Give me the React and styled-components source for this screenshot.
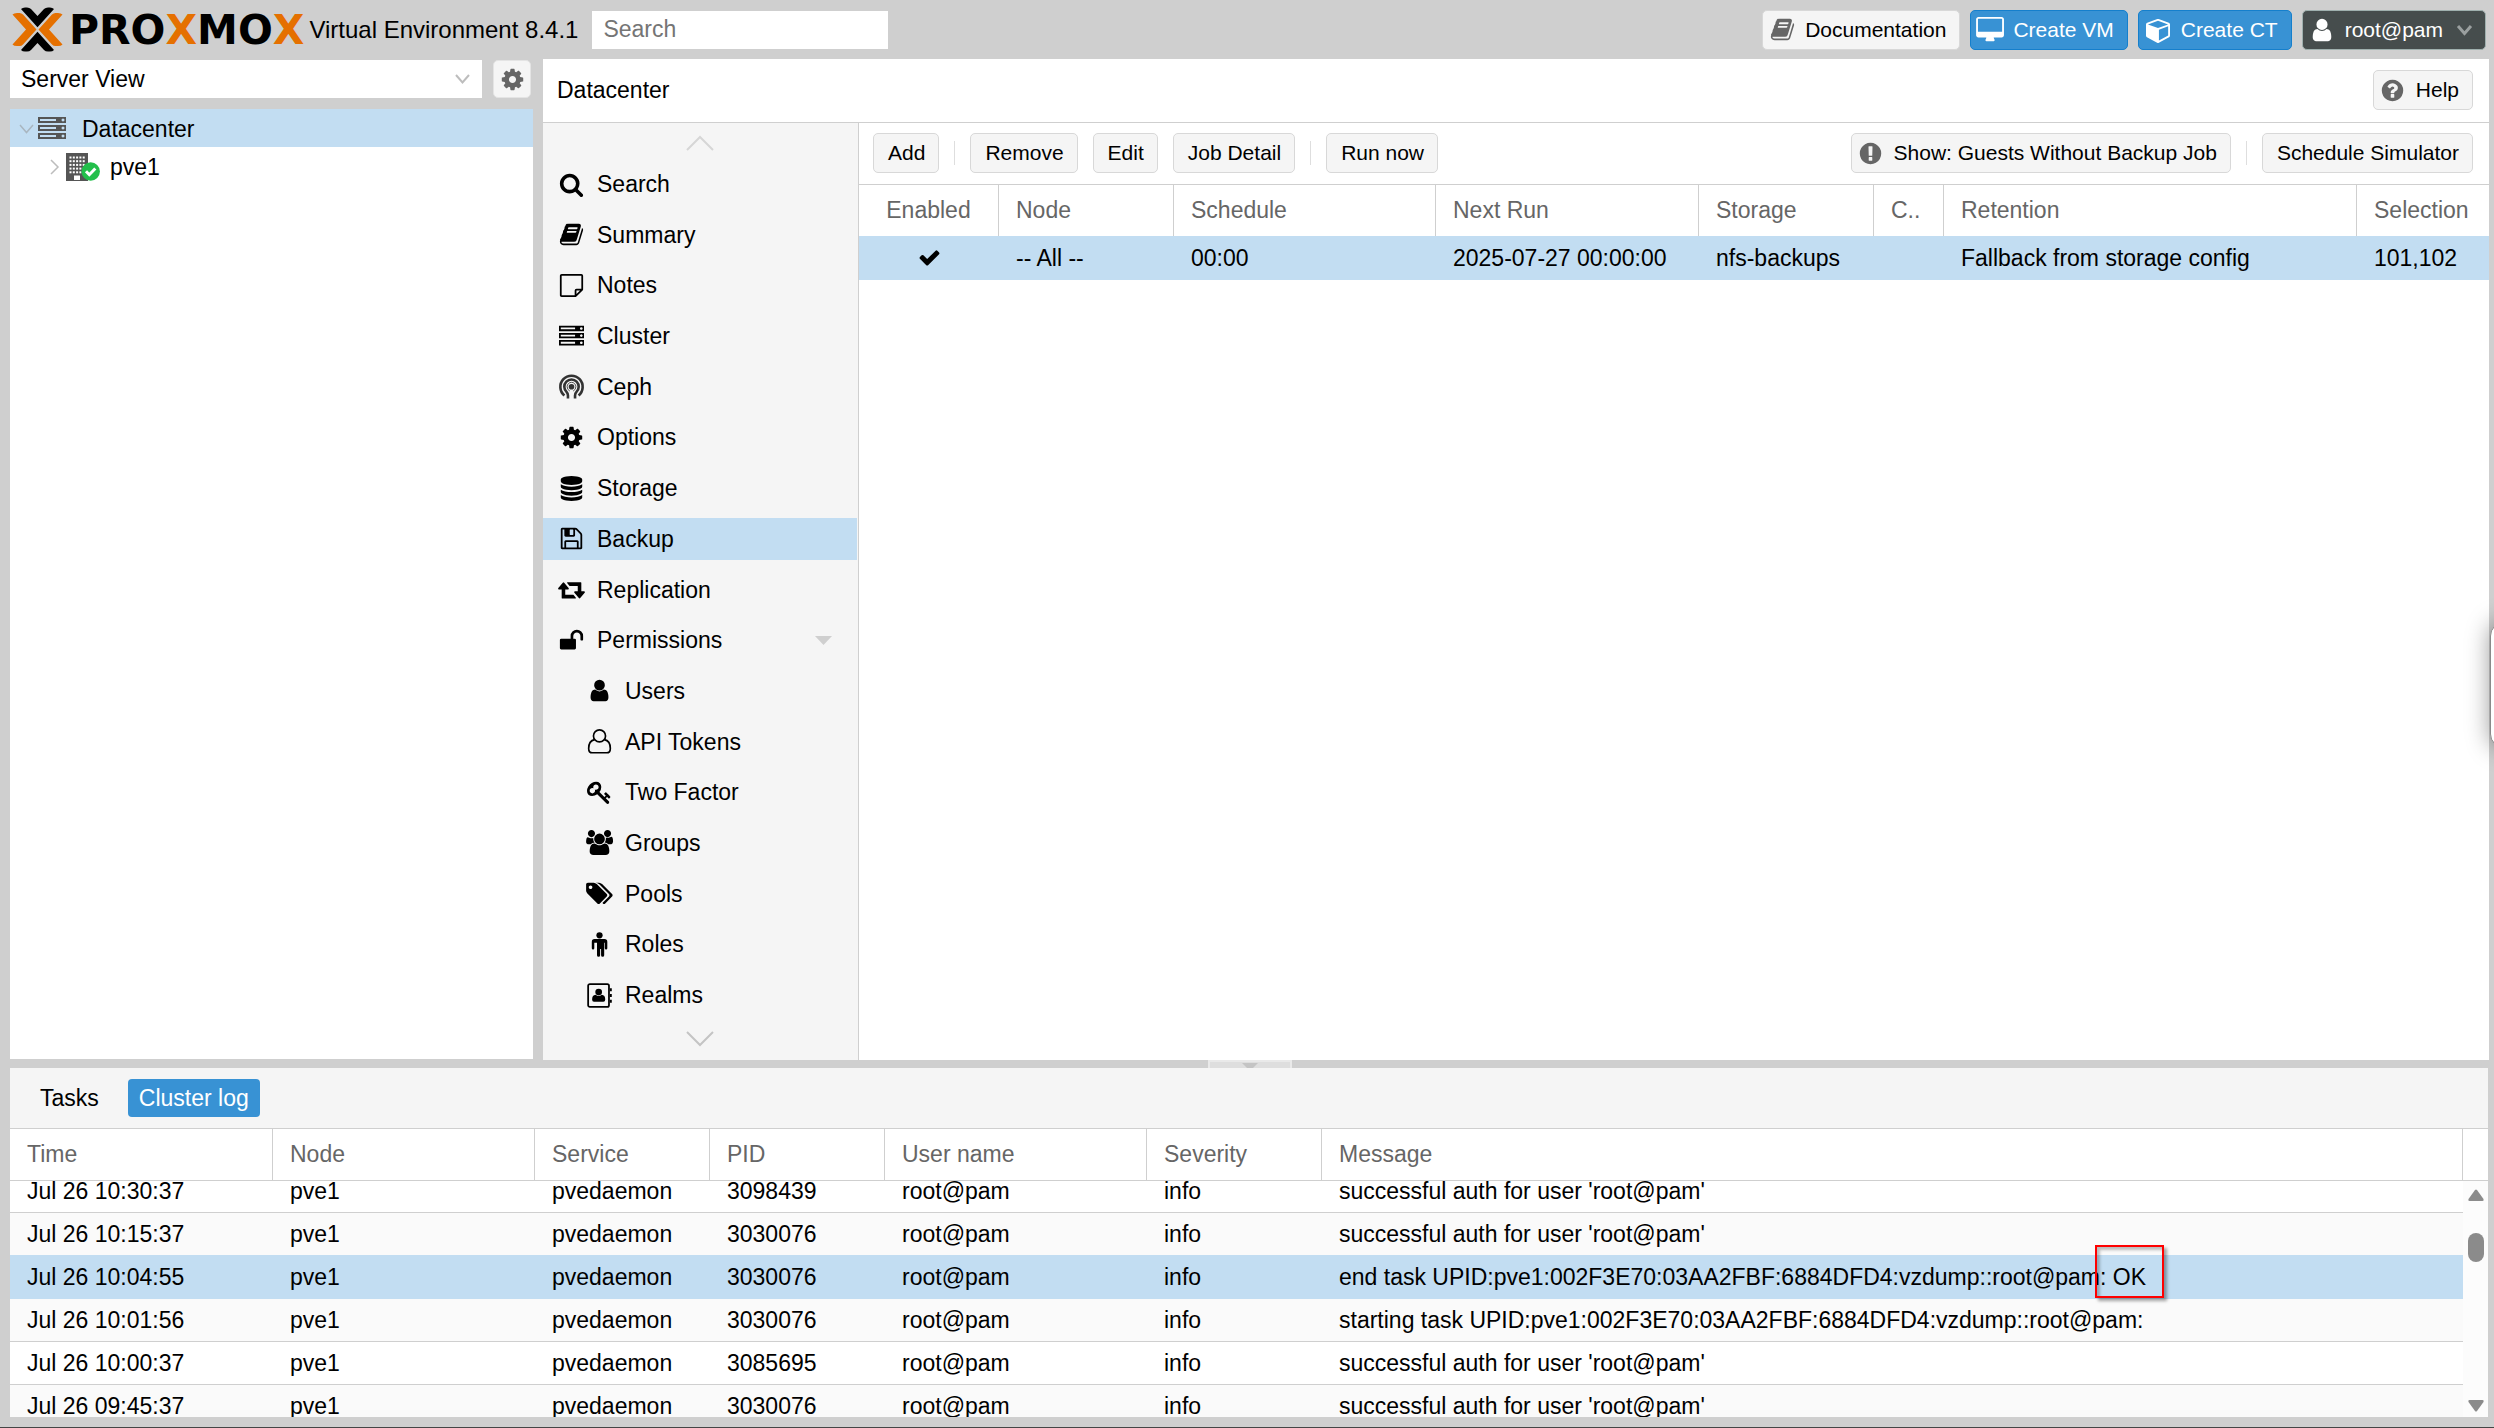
import React, { useLayoutEffect, useRef } from "react";
import styled, { createGlobalStyle, css } from "styled-components";

const GlobalStyle = createGlobalStyle`
  *, *::before, *::after { box-sizing: border-box; }
  html, body, #root { height: 100%; }
  body {
    margin: 0;
    overflow: hidden;
    background: #cfcfcf;
    color: #000;
    font: 23px/28px "Liberation Sans", Arial, Helvetica, sans-serif;
  }
  button, input, select { font: inherit; color: inherit; margin: 0; }
`;

/* ---------- icons ---------- */

const Svg = styled.svg`
  display: block;
  flex: none;
  width: ${(p) => p.$w || p.$size || 24}px;
  height: ${(p) => p.$size || 24}px;
  fill: currentColor;
  overflow: visible;
`;

const PATHS = {
  search: [1792, "M1216 832q0-185-131.5-316.5t-316.5-131.5-316.5 131.5-131.5 316.5 131.5 316.5 316.5 131.5 316.5-131.5 131.5-316.5zm512 832q0 52-38 90t-90 38q-54 0-90-38l-343-342q-179 124-399 124-143 0-273.5-55.5t-225-150-150-225-55.5-273.5 55.5-273.5 150-225 225-150 273.5-55.5 273.5 55.5 225 150 150 225 55.5 273.5q0 220-124 399l343 343q37 37 37 90z"],
  book: [1792, "M1703 478q40 57 18 129l-275 906q-19 64-76.5 107.5t-122.5 43.5h-923q-77 0-148.5-53.5t-99.5-131.5q-24-67-2-127 0-4 3-27t4-37q1-8-3-21.5t-3-19.5q2-11 8-21t16.5-23.5 16.5-23.5q23-38 45-91.5t30-91.5q3-10 .5-30t-.5-28q3-11 17-28t17-23q21-36 42-92t25-90q1-9-2.5-32t.5-28q4-13 22-30.5t22-22.5q19-26 42.5-84.5t27.5-96.5q1-8-3-25.5t-2-26.5q2-8 9-18t18-23 17-21q8-12 16.5-30.5t15-35 16-36 19.5-32 26.5-23.5 36-11.5 47.5 5.5l-1 3q38-9 51-9h761q74 0 114 56t18 130l-274 906q-36 119-71.5 153.5t-128.5 34.5h-869q-27 0-38 15-11 16-1 43 24 70 144 70h923q29 0 56-15.5t35-41.5l300-987q7-22 5-57 38 15 59 43zm-1064 2q-4 13 2 22.5t20 9.5h608q13 0 25.5-9.5t16.5-22.5l21-64q4-13-2-22.5t-20-9.5h-608q-13 0-25.5 9.5t-16.5 22.5zm-83 256q-4 13 2 22.5t20 9.5h608q13 0 25.5-9.5t16.5-22.5l21-64q4-13-2-22.5t-20-9.5h-608q-13 0-25.5 9.5t-16.5 22.5z"],
  server: [1792, "M128 1408h1024v-128h-1024v128zm0-512h1024v-128h-1024v128zm1568 448q0-40-28-68t-68-28-68 28-28 68 28 68 68 28 68-28 28-68zm-1568-960h1024v-128h-1024v128zm1568 448q0-40-28-68t-68-28-68 28-28 68 28 68 68 28 68-28 28-68zm0-512q0-40-28-68t-68-28-68 28-28 68 28 68 68 28 68-28 28-68zm96 832v384h-1792v-384h1792zm0-512v384h-1792v-384h1792zm0-512v384h-1792v-384h1792z"],
  gear: [1792, "M1152 896q0-106-75-181t-181-75-181 75-75 181 75 181 181 75 181-75 75-181zm512-109v222q0 12-8 23t-20 13l-185 28q-19 54-39 91 35 50 107 138 10 12 10 25t-9 23q-27 37-99 108t-94 71q-12 0-26-9l-138-108q-44 23-91 38-16 136-29 186-7 28-36 28h-222q-14 0-24.5-8.5t-11.5-21.5l-28-184q-49-16-90-37l-141 107q-10 9-25 9-14 0-25-11-126-114-165-168-7-10-7-23 0-12 8-23 15-21 51-66.5t54-70.5q-27-50-41-99l-183-27q-13-2-21-12.5t-8-23.5v-222q0-12 8-23t19-13l186-28q14-46 39-92-40-57-107-138-10-12-10-24 0-10 9-23 26-36 98.5-107.5t94.5-71.5q13 0 26 10l138 107q44-23 91-38 16-136 29-186 7-28 36-28h222q14 0 24.5 8.5t11.5 21.5l28 184q49 16 90 37l142-107q9-9 24-9 13 0 25 10 129 119 165 170 7 8 7 22 0 12-8 23-15 21-51 66.5t-54 70.5q26 50 41 98l183 28q13 2 21 12.5t8 23.5z"],
  database: [1792, "M896 768q237 0 443-43t325-127v170q0 69-103 128t-280 93.5-385 34.5-385-34.5-280-93.5-103-128v-170q119 84 325 127t443 43zm0 768q237 0 443-43t325-127v170q0 69-103 128t-280 93.5-385 34.5-385-34.5-280-93.5-103-128v-170q119 84 325 127t443 43zm0-384q237 0 443-43t325-127v170q0 69-103 128t-280 93.5-385 34.5-385-34.5-280-93.5-103-128v-170q119 84 325 127t443 43zm0-1152q208 0 385 34.5t280 93.5 103 128v128q0 69-103 128t-280 93.5-385 34.5-385-34.5-280-93.5-103-128v-128q0-69 103-128t280-93.5 385-34.5z"],
  floppy: [1792, "M512 1536h768v-384h-768v384zm896 0h128v-896q0-14-10-38.5t-20-34.5l-281-281q-10-10-34-20t-39-10v416q0 40-28 68t-68 28h-576q-40 0-68-28t-28-68v-416h-128v1280h128v-416q0-40 28-68t68-28h832q40 0 68 28t28 68v416zm-384-928v-320q0-13-9.5-22.5t-22.5-9.5h-192q-13 0-22.5 9.5t-9.5 22.5v320q0 13 9.5 22.5t22.5 9.5h192q13 0 22.5-9.5t9.5-22.5zm640 32v928q0 40-28 68t-68 28h-1344q-40 0-68-28t-28-68v-1344q0-40 28-68t68-28h928q40 0 88 20t76 48l280 280q28 28 48 76t20 88z"],
  retweet: [1920, "M1280 1504q0 13-9.5 22.5t-22.5 9.5h-960q-8 0-13.5-2t-9-7-5.5-8-3-11.5-1-11.5v-600h-192q-26 0-45-19t-19-45q0-24 15-41l320-384q19-22 49-22t49 22l320 384q15 17 15 41 0 26-19 45t-45 19h-192v384h576q16 0 25 11l160 192q7 10 7 21zm640-416q0 24-15 41l-320 384q-20 23-49 23t-49-23l-320-384q-15-17-15-41 0-26 19-45t45-19h192v-384h-576q-16 0-25-12l-160-192q-7-9-7-20 0-13 9.5-22.5t22.5-9.5h960q8 0 13.5 2t9 7 5.5 8 3 11.5 1 11.5v600h192q26 0 45 19t19 45z"],
  unlock: [1792, "M1728 576v256q0 26-19 45t-45 19h-64q-26 0-45-19t-19-45v-256q0-106-75-181t-181-75-181 75-75 181v192h96q40 0 68 28t28 68v576q0 40-28 68t-68 28h-960q-40 0-68-28t-28-68v-576q0-40 28-68t68-28h672v-192q0-185 131.5-316.5t316.5-131.5 316.5 131.5 131.5 316.5z"],
  user: [1792, "M1536 1399q0 109-62.5 187t-150.5 78h-854q-88 0-150.5-78t-62.5-187q0-85 8.5-160.5t31.5-152 58.5-131 94-89 134.5-34.5q131 128 313 128t313-128q76 0 134.5 34.5t94 89 58.5 131 31.5 152 8.5 160.5zm-256-887q0 159-112.5 271.5t-271.5 112.5-271.5-112.5-112.5-271.5 112.5-271.5 271.5-112.5 271.5 112.5 112.5 271.5z"],
  key: [1792, "M832 512q0-80-56-136t-136-56-136 56-56 136q0 42 19 83-41-19-83-19-80 0-136 56t-56 136 56 136 136 56 136-56 56-136q0-42-19-83 41 19 83 19 80 0 136-56t56-136zm851 704q0 17-49 66t-66 49q-9 0-28.5-16t-36.5-33-38.5-40-24.5-26l-96 96 220 220q28 28 28 68 0 42-39 81t-81 39q-40 0-68-28l-671-671q-176 131-365 131-163 0-265.5-102.5t-102.5-265.5q0-160 95-313t248-248 313-95q163 0 265.5 102.5t102.5 265.5q0 189-131 365l355 355 96-96q-3-3-26-24.5t-40-38.5-33-36.5-16-28.5q0-17 49-66t66-49q13 0 23 10 6 6 46 44.5t82 79.5 86.5 86 73 78 28.5 41z"],
  users: [1920, "M593 896q-162 5-265 128h-134q-82 0-138-40.5t-56-118.5q0-353 124-353 6 0 43.5 21t97.5 42.5 119 21.5q67 0 133-23-5 37-5 66 0 159 93 293zm1071 637q0 120-73 189.5t-194 69.5h-874q-121 0-194-69.5t-73-189.5q0-53 3.5-103.5t14-109 26.5-108.5 43-97.5 62-81 85.5-53.5 111.5-20q10 0 43 21.5t73 48 107 48 135 21.5 135-21.5 107-48 73-48 43-21.5q61 0 111.5 20t85.5 53.5 62 81 43 97.5 26.5 108.5 14 109 3.5 103.5zm-1024-1277q0 106-75 181t-181 75-181-75-75-181 75-181 181-75 181 75 75 181zm704 384q0 159-112.5 271.5t-271.5 112.5-271.5-112.5-112.5-271.5 112.5-271.5 271.5-112.5 271.5 112.5 112.5 271.5zm576 225q0 78-56 118.5t-138 40.5h-134q-103-123-265-128 93-134 93-293 0-29-5-66 66 23 133 23 59 0 119-21.5t97.5-42.5 43.5-21q124 0 124 353zm-128-609q0 106-75 181t-181 75-181-75-75-181 75-181 181-75 181 75 75 181z"],
  tags: [1920, "M448 448q0-53-37.5-90.5t-90.5-37.5-90.5 37.5-37.5 90.5 37.5 90.5 90.5 37.5 90.5-37.5 37.5-90.5zm1067 576q0 53-37 90l-491 492q-39 37-91 37-53 0-90-37l-715-716q-38-37-64.5-101t-26.5-117v-416q0-52 38-90t90-38h416q53 0 117 26.5t102 64.5l715 714q37 39 37 91zm384 0q0 53-37 90l-491 492q-39 37-91 37-36 0-59-14t-53-45l470-470q37-37 37-90 0-52-37-91l-715-714q-38-38-102-64.5t-117-26.5h224q53 0 117 26.5t102 64.5l715 714q37 39 37 91z"],
  question: [1792, "M1024 1376v-192q0-14-9-23t-23-9h-192q-14 0-23 9t-9 23v192q0 14 9 23t23 9h192q14 0 23-9t9-23zm256-672q0-88-55.5-163t-138.5-116-170-41q-243 0-371 213-15 24 8 42l132 100q7 6 19 6 16 0 25-12 53-68 86-92 34-24 86-24 48 0 85.5 26t37.5 59q0 38-20 61t-68 45q-63 28-115.5 86.5t-52.5 125.5v36q0 14 9 23t23 9h192q14 0 23-9t9-23q0-19 21.5-49.5t54.5-49.5q32-18 49-28.5t46-35 44.5-48 28-60.5 12.5-81zm384 192q0 209-103 385.5t-279.5 279.5-385.5 103-385.5-103-279.5-279.5-103-385.5 103-385.5 279.5-279.5 385.5-103 385.5 103 279.5 279.5 103 385.5z"],
  exclamation: [1792, "M896 128q209 0 385.5 103t279.5 279.5 103 385.5-103 385.5-279.5 279.5-385.5 103-385.5-103-279.5-279.5-103-385.5 103-385.5 279.5-279.5 385.5-103zm128 1247v-190q0-14-9-23.5t-22-9.5h-192q-13 0-23 10t-10 23v190q0 13 10 23t23 10h192q13 0 22-9.5t9-23.5zm-2-344l18-621q0-12-10-18-10-8-24-8h-220q-14 0-24 8-10 6-10 18l17 621q0 10 10 17.5t24 7.5h185q14 0 23.5-7.5t10.5-17.5z"],
  desktop: [1856, "M1728 992v-832q0-13-9.5-22.5t-22.5-9.5h-1600q-13 0-22.5 9.5t-9.5 22.5v832q0 13 9.5 22.5t22.5 9.5h1600q13 0 22.5-9.5t9.5-22.5zm128-832v1088q0 66-47 113t-113 47h-544q0 37 16 77.5t32 71 16 43.5q0 26-19 45t-45 19h-512q-26 0-45-19t-19-45q0-14 16-44t32-70 16-78h-544q-66 0-113-47t-47-113v-1088q0-66 47-113t113-47h1600q66 0 113 47t47 113z"],
  cube: [1664, "M896 1629l640-349v-636l-640 233v752zm-64-865l698-254-698-254-698 254 698 254zm832-252v768q0 35-18 65t-49 47l-704 384q-28 16-61 16t-61-16l-704-384q-31-17-49-47t-18-65v-768q0-40 23-73t61-47l704-256q22-8 44-8t44 8l704 256q38 14 61 47t23 73z"],
  check: [1792, "M1671 566q0 40-28 68l-724 724-136 136q-28 28-68 28t-68-28l-136-136-362-362q-28-28-28-68t28-68l136-136q28-28 68-28t68 28l294 295 656-657q28-28 68-28t68 28l136 136q28 28 28 68z"],
};

function Icon({ name, size = 24 }) {
  if (name === "note")
    return (
      <Svg viewBox="0 0 24 24" $size={size} aria-hidden="true">
        <path
          d="M2.6 1.8h18.8q.9 0 .9.9v13.2l-6.4 6.3H2.6q-.9 0-.9-.9V2.7q0-.9.9-.9zM15.9 22V16.8q0-.9.9-.9H22"
          fill="none" stroke="currentColor" strokeWidth="1.7" strokeLinejoin="round" />
      </Svg>
    );
  if (name === "ceph")
    return (
      <Svg viewBox="0 0 24 24" $size={size} color="#333" aria-hidden="true">
        <g fill="none" stroke="currentColor" strokeWidth="2.5">
          <path d="M5.2 20.6A10.7 10.7 0 1 1 18.8 20.6" />
          <path d="M8.6 23.6V20.6Q8.6 18.6 7.2 17.2A6.9 6.9 0 1 1 16.8 17.2Q15.4 18.6 15.4 20.6V23.6" />
        </g>
        <circle cx="12" cy="12.2" r="2.7" />
        <path d="M10.4 16.4q-2.6-1.4-2.6-4.2a4.2 4.2 0 0 1 8.4 0q0 2.8-2.6 4.2" fill="none" stroke="currentColor" strokeWidth=".8" />
      </Svg>
    );
  if (name === "user-o")
    return (
      <Svg viewBox="0 0 24 24" $size={size} aria-hidden="true">
        <g fill="none" stroke="currentColor" strokeWidth="1.6">
          <circle cx="12" cy="6.6" r="5.8" />
          <path d="M7.3 10.2Q1.6 11.4 1.6 18.6q0 4.2 3.6 4.2h13.6q3.6 0 3.6-4.2 0-7.2-5.7-8.4" />
        </g>
      </Svg>
    );
  if (name === "male")
    return (
      <Svg viewBox="0 0 24 24" $size={size} aria-hidden="true">
        <circle cx="12" cy="3.2" r="3" />
        <path d="M7.2 6.8h9.6q2.7 0 2.7 2.7v6q0 1.2-1.2 1.2t-1.2-1.2V10.3h-.6V22.2q0 1.5-1.5 1.5t-1.5-1.5V16.4h-.9v5.8q0 1.5-1.5 1.5t-1.5-1.5V10.3H7v5.2q0 1.2-1.2 1.2t-1.2-1.2v-6q0-2.7 2.6-2.7z" />
      </Svg>
    );
  if (name === "address-book")
    return (
      <Svg viewBox="0 0 24 24" $size={size} aria-hidden="true">
        <rect x="1.1" y="1" width="20" height="22" rx="1.6" fill="none" stroke="currentColor" strokeWidth="1.7" />
        <path d="M22 5h1.8v3H22zM22 10.500h1.8v3H22zM22 16h1.8v3H22z" />
        <circle cx="11.2" cy="8.6" r="3.2" />
        <path d="M8.3 11.2q2.900 2.300 5.800 0 3.400.3 3.400 4.600 0 2.200-1.800 2.200H6.700q-1.800 0-1.800-2.200 0-4.300 3.400-4.600z" />
      </Svg>
    );
  const [box, d] = PATHS[name];
  return (
    <Svg viewBox={`0 0 ${box} 1792`} $size={size} $w={Math.round((size * box) / 1792)} aria-hidden="true">
      <path d={d} fillRule={name === "server" ? "evenodd" : "nonzero"} />
    </Svg>
  );
}

function Chevron({ width, height, d, color = "#bdbdbd", stroke = 2 }) {
  return (
    <Svg $w={width} $size={height} viewBox={`0 0 ${width} ${height}`} aria-hidden="true">
      <path d={d} fill="none" stroke={color} strokeWidth={stroke} />
    </Svg>
  );
}

/* ---------- shared controls ---------- */

const tones = {
  plain: css`background: #f5f5f5; border-color: #d8d8d8; color: #000;`,
  primary: css`background: #3892d4; border-color: #157fcc; color: #fff;`,
  dark: css`background: #464d4d; border-color: #9fb0ae; color: #fff;`,
};

const Button = styled.button`
  display: inline-flex;
  align-items: center;
  flex: none;
  gap: 9px;
  height: 40px;
  padding: 0 13px 0 ${(p) => (p.$icon ? 5 : 14)}px;
  border: 1px solid;
  border-radius: 5px;
  font-size: 21px;
  line-height: 24px;
  white-space: nowrap;
  ${(p) => tones[p.$tone || "plain"]}
`;

const IconBox = styled.span`
  display: flex;
  align-items: center;
  justify-content: center;
  width: 28px;
  flex: none;
  color: ${(p) => p.$color || "inherit"};
`;

const MenuArrow = styled.span`
  padding-left: 5px;
`;

function IconButton({ icon, tone, iconColor = "#666", size = 25, children }) {
  return (
    <Button type="button" $icon $tone={tone}>
      <IconBox $color={iconColor}><Icon name={icon} size={size} /></IconBox>
      {children}
    </Button>
  );
}

const Spacer = styled.div`flex: 1;`;

/* ---------- page frame ---------- */

const Page = styled.div`
  display: flex;
  flex-direction: column;
  height: 100vh;
  padding: 0 5px 10px 10px;
  border-bottom: 1px solid #454545;
`;

const Header = styled.header`
  display: flex;
  align-items: center;
  gap: 10px;
  flex: none;
  height: 59px;
  padding-right: 3px;
`;

const Brand = styled.div`
  display: flex;
  align-items: center;
  gap: 5px;
  padding-right: 4px;
`;

const Wordmark = styled.span`
  font: bold 41px/40px "DejaVu Sans", Verdana, sans-serif;
  b { color: #e57000; }
`;

const Product = styled.span`
  font-size: 24px;
  white-space: nowrap;
`;

const SearchInput = styled.input`
  width: 296px;
  height: 38px;
  padding: 0 11px;
  border: 0;
  background: #fff;
  &::placeholder { color: #757575; opacity: 1; }
`;

const Workspace = styled.div`
  display: flex;
  gap: 10px;
  flex: 1;
  min-height: 0;
`;

/* ---------- resource tree ---------- */

const West = styled.aside`
  display: flex;
  flex-direction: column;
  gap: 11px;
  width: 523px;
  flex: none;
  padding: 1px 0;
`;

const ViewBar = styled.div`
  display: flex;
  gap: 11px;
  padding-right: 2px;
`;

const ViewPicker = styled.label`
  position: relative;
  flex: 1;
  svg { position: absolute; right: 12px; top: 14px; pointer-events: none; }
`;

const ViewSelect = styled.select`
  appearance: none;
  width: 100%;
  height: 38px;
  padding: 0 11px;
  border: 0;
  border-radius: 0;
  background: #fff;
`;

const GearButton = styled.button`
  display: flex;
  align-items: center;
  justify-content: center;
  width: 38px;
  height: 38px;
  padding: 0;
  border: 1px solid #e4e4e4;
  border-radius: 5px;
  background: #f5f5f5;
  color: #666;
`;

const Tree = styled.ul`
  flex: 1;
  margin: 0;
  padding: 0;
  list-style: none;
  background: #fff;
`;

const TreeRow = styled.li`
  display: flex;
  align-items: center;
  height: 38px;
  padding-top: 2px;
  padding-left: ${(p) => 6 + p.$level * 28}px;
  background: ${(p) => (p.$selected ? "#c2ddf2" : "transparent")};
`;

const Expander = styled.span`
  display: flex;
  justify-content: center;
  width: 20px;
  margin-right: 2px;
`;

const TreeIcon = styled.span`
  width: ${(p) => p.$w}px;
  color: #555;
`;

/* ---------- datacenter panel ---------- */

const Center = styled.main`
  display: flex;
  flex-direction: column;
  flex: 1;
  min-width: 0;
  background: #fff;
`;

const TitleBar = styled.div`
  display: flex;
  align-items: center;
  justify-content: space-between;
  height: 64px;
  padding: 0 16px 1px 14px;
  border-bottom: 1px solid #cfcfcf;
`;

const Title = styled.h1`
  margin: 0;
  font-size: 23px;
  font-weight: 400;
`;

const Split = styled.div`
  display: flex;
  flex: 1;
  min-height: 0;
`;

const Nav = styled.nav`
  display: flex;
  flex-direction: column;
  width: 316px;
  flex: none;
  padding-right: 1px;
  background: #f5f5f5;
  border-right: 1px solid #cfcfcf;
`;

const NavScroller = styled.button`
  display: flex;
  align-items: center;
  justify-content: center;
  height: ${(p) => p.$h}px;
  padding: 0;
  border: 0;
  background: none;
`;

const NavList = styled.ul`
  display: flex;
  flex-direction: column;
  justify-content: space-between;
  flex: 1;
  margin: 0;
  padding: 0;
  list-style: none;
`;

const NavLink = styled.a`
  display: flex;
  align-items: center;
  gap: 12px;
  height: 42px;
  padding: 0 25px 0 ${(p) => (p.$nested ? 42 : 14)}px;
  background: ${(p) => (p.$selected ? "#c2ddf2" : "transparent")};
  color: #000;
  text-decoration: none;
`;

const Content = styled.section`
  flex: 1;
  min-width: 0;
`;

const Toolbar = styled.div`
  display: flex;
  align-items: center;
  gap: 15px;
  height: 62px;
  padding: 0 16px 1px 14px;
  border-bottom: 1px solid #cfcfcf;
`;

const Divider = styled.span`
  width: 1px;
  height: 24px;
  background: #dedede;
`;

/* ---------- grids ---------- */

const Table = styled.table`
  width: 100%;
  table-layout: fixed;
  border-collapse: separate;
  border-spacing: 0;
`;

const Col = styled.col`
  width: ${(p) => (p.$w ? `${p.$w}px` : "auto")};
`;

const Th = styled.th`
  height: ${(p) => (p.$sticky ? 52 : 51)}px;
  padding: 0 17px 2px;
  border-right: ${(p) => (p.$last ? 0 : 1)}px solid #cfcfcf;
  background: #fff;
  color: #666;
  font-weight: 400;
  text-align: ${(p) => p.$align || "left"};
  white-space: nowrap;
  ${(p) => p.$sticky && css`
    position: sticky;
    top: 0;
    z-index: 2;
    border-bottom: 1px solid #cfcfcf;
  `}
`;

const Tr = styled.tr`
  background: ${(p) => (p.$selected ? "#c2ddf2" : p.$alt ? "#fafafa" : "#fff")};
`;

const Td = styled.td`
  height: ${(p) => p.$h || 43}px;
  padding: 0 17px;
  border-bottom: 1px solid ${(p) => (p.$selected ? "#c2ddf2" : "#cfcfcf")};
  white-space: nowrap;
  svg { margin: 0 auto; }
`;

/* ---------- log panel ---------- */

const Splitter = styled.div`
  display: flex;
  justify-content: center;
  flex: none;
  height: 8px;
`;

const SplitHandle = styled.span`
  display: flex;
  align-items: flex-end;
  justify-content: center;
  width: 84px;
  border: 2px solid #e9e9e9;
  border-bottom: 0;
  background: #dedede;
`;

const LogPanel = styled.section`
  display: flex;
  flex-direction: column;
  flex: none;
  height: 349px;
  margin-right: 1px;
  background: #f5f5f5;
`;

const Tabs = styled.div`
  display: flex;
  align-items: center;
  gap: 18px;
  height: 61px;
  padding-left: 19px;
  border-bottom: 1px solid #cfcfcf;
`;

const Tab = styled.button`
  height: 38px;
  padding: 0 11px;
  border: 0;
  border-radius: 4px;
  background: ${(p) => (p.$active ? "#3892d4" : "transparent")};
  color: ${(p) => (p.$active ? "#fff" : "#000")};
`;

const LogArea = styled.div`
  display: flex;
  flex: 1;
  min-height: 0;
`;

const LogScroll = styled.div`
  flex: 1;
  min-width: 0;
  overflow: auto;
  scrollbar-width: none;
`;

const ScrollRail = styled.div`
  display: flex;
  flex-direction: column;
  align-items: center;
  width: 25px;
  padding-bottom: 5px;
  background: #fcfcfc;
  color: #8b8b8b;
`;

const RailCap = styled.div`
  align-self: stretch;
  height: 52px;
  margin-bottom: 8px;
  border-bottom: 1px solid #cfcfcf;
  background: #fff;
`;

const RailThumb = styled.div`
  width: 16px;
  height: 29px;
  margin-top: 32px;
  border-radius: 8px;
  background: #8b8b8b;
`;

const Marked = styled.span`
  position: relative;
  &::after {
    content: "";
    position: absolute;
    left: -18px;
    right: -18px;
    top: -19px;
    bottom: -8px;
    border: 2px solid #f00;
    box-shadow: 3px 3px 3px rgba(0, 0, 0, 0.35), inset 3px 3px 3px rgba(0, 0, 0, 0.25);
  }
`;

const EdgeTab = styled.div`
  position: fixed;
  right: -26px;
  top: 622px;
  width: 30px;
  height: 126px;
  border: 1px solid #8a8a8a;
  border-radius: 14px;
  background: #fff;
  box-shadow: 0 0 24px rgba(0, 0, 0, 0.4);
`;

/* ---------- data ---------- */

const NAV = [
  ["Search", "search"],
  ["Summary", "book"],
  ["Notes", "note"],
  ["Cluster", "server"],
  ["Ceph", "ceph"],
  ["Options", "gear"],
  ["Storage", "database"],
  ["Backup", "floppy"],
  ["Replication", "retweet"],
  ["Permissions", "unlock"],
  ["Users", "user", true],
  ["API Tokens", "user-o", true],
  ["Two Factor", "key", true],
  ["Groups", "users", true],
  ["Pools", "tags", true],
  ["Roles", "male", true],
  ["Realms", "address-book", true],
];

const BACKUP_COLUMNS = [
  ["Enabled", 140], ["Node", 175], ["Schedule", 262], ["Next Run", 263],
  ["Storage", 175], ["C..", 70], ["Retention", 0], ["Selection", 132],
];

const LOG_COLUMNS = [
  ["Time", 263], ["Node", 262], ["Service", 175], ["PID", 175],
  ["User name", 262], ["Severity", 175], ["Message", 0],
];

const AUTH = "successful auth for user 'root@pam'";
const LOG = [
  ["Jul 26 10:30:37", "3098439", AUTH],
  ["Jul 26 10:15:37", "3030076", AUTH],
  ["Jul 26 10:04:55", "3030076", "end task UPID:pve1:002F3E70:03AA2FBF:6884DFD4:vzdump::root@pam: ", "OK"],
  ["Jul 26 10:01:56", "3030076", "starting task UPID:pve1:002F3E70:03AA2FBF:6884DFD4:vzdump::root@pam:"],
  ["Jul 26 10:00:37", "3085695", AUTH],
  ["Jul 26 09:45:37", "3030076", AUTH],
];
const SELECTED_LOG = 2;

/* ---------- sections ---------- */

function LogoMark() {
  return (
    <Svg $w={54} $size={48} viewBox="10 5 54 48" aria-hidden="true">
      <path fill="#e57000" d="M12.5 13.5Q14 12 17 12h2.500q2 0 3.500 1.500L36.500 28.500 23 43.500Q21.500 45 19.500 45H17q-3 0-4.500-1.500L26 28.500zM62.500 13.500Q61 12 58 12h-2.500q-2 0-3.500 1.500L38.500 28.500 52 43.500q1.500 1.500 3.500 1.500H58q3 0 4.500-1.500L49 28.500z" />
      <path fill="#000" d="M21 8q1.500-1.500 4-1.500h2q2.500 0 4 1.500l6.500 7L44 8q1.500-1.500 4-1.500h2q2.500 0 4 1.500L37.500 26.300zM21 49q1.500 1.500 4 1.500h2q2.500 0 4-1.500l6.500-7 6.500 7q1.500 1.500 4 1.500h2q2.500 0 4-1.500L37.500 30.700z" />
    </Svg>
  );
}

function NodeIcon() {
  const windows = [];
  for (let r = 0; r < 5; r++)
    for (let c = 0; c < 5; c++)
      windows.push(<rect key={`${r}-${c}`} x={3.5 + c * 3.3} y={3.5 + r * 3.7} width="2" height="2" fill="#fff" />);
  return (
    <Svg $w={34} $size={28} viewBox="0 0 34 28" aria-hidden="true">
      <path d="M0 0h22v28H0z" />
      {windows}
      <path fill="#fff" d="M8 22.5h6V27H8z" />
      <circle cx="24.7" cy="18.5" r="9.2" fill="#23bf4b" />
      <path d="M20 18.3l3.300 3.400 6-6.200" fill="none" stroke="#fff" strokeWidth="3" />
    </Svg>
  );
}

function TopBar() {
  return (
    <Header>
      <Brand>
        <LogoMark />
        <Wordmark>PRO<b>X</b>MO<b>X</b></Wordmark>
        <Product>Virtual Environment 8.4.1</Product>
      </Brand>
      <SearchInput type="text" placeholder="Search" aria-label="Search" />
      <Spacer />
      <IconButton icon="book">Documentation</IconButton>
      <IconButton icon="desktop" tone="primary" iconColor="#fff" size={26}>Create VM</IconButton>
      <IconButton icon="cube" tone="primary" iconColor="#fff" size={26}>Create CT</IconButton>
      <IconButton icon="user" tone="dark" iconColor="#fff" size={26}>
        root@pam
        <MenuArrow><Chevron width={15} height={10} d="M1 1l6.500 7.500L14 1" color="#9a9f9f" stroke={3} /></MenuArrow>
      </IconButton>
    </Header>
  );
}

function ResourceTree() {
  return (
    <West>
      <ViewBar>
        <ViewPicker>
          <ViewSelect aria-label="View" defaultValue="server">
            <option value="server">Server View</option>
          </ViewSelect>
          <Chevron width={15} height={10} d="M1 1l6.500 7.500L14 1" />
        </ViewPicker>
        <GearButton type="button" aria-label="Tree settings"><Icon name="gear" size={25} /></GearButton>
      </ViewBar>
      <Tree>
        <TreeRow $level={0} $selected>
          <Expander><Chevron width={15} height={10} d="M1 1l6.500 7.500L14 1" color="#a9b6c0" stroke={1.5} /></Expander>
          <TreeIcon $w={44}><Icon name="server" size={28} /></TreeIcon>
          Datacenter
        </TreeRow>
        <TreeRow $level={1}>
          <Expander><Chevron width={9} height={16} d="M1 1l7 7-7 7" color="#bdbdbd" stroke={1.5} /></Expander>
          <TreeIcon $w={44}><NodeIcon /></TreeIcon>
          pve1
        </TreeRow>
      </Tree>
    </West>
  );
}

function ConfigNav() {
  return (
    <Nav>
      <NavScroller type="button" aria-label="Scroll up" $h={40}>
        <Chevron width={28} height={15} d="M1 14L14 1l13 13" color="#d6d6d6" />
      </NavScroller>
      <NavList>
        {NAV.map(([label, icon, nested]) => (
          <li key={label}>
            <NavLink href="#" $nested={nested} $selected={label === "Backup"}>
              <IconBox><Icon name={icon} size={25} /></IconBox>
              {label}
              {label === "Permissions" && (
                <>
                  <Spacer />
                  <Svg $w={17} $size={9} viewBox="0 0 17 9" color="#cfcfcf" aria-hidden="true"><path d="M0 0h17L8.5 9z" /></Svg>
                </>
              )}
            </NavLink>
          </li>
        ))}
      </NavList>
      <NavScroller type="button" aria-label="Scroll down" $h={44}>
        <Chevron width={28} height={15} d="M1 1l13 13L27 1" color="#c4c4c4" />
      </NavScroller>
    </Nav>
  );
}

function BackupJobs() {
  return (
    <Content>
      <Toolbar>
        <Button type="button">Add</Button>
        <Divider />
        <Button type="button">Remove</Button>
        <Button type="button">Edit</Button>
        <Button type="button">Job Detail</Button>
        <Divider />
        <Button type="button">Run now</Button>
        <Spacer />
        <IconButton icon="exclamation">Show: Guests Without Backup Job</IconButton>
        <Divider />
        <Button type="button">Schedule Simulator</Button>
      </Toolbar>
      <Table>
        <colgroup>{BACKUP_COLUMNS.map(([n, w]) => <Col key={n} $w={w} />)}</colgroup>
        <thead>
          <tr>
            {BACKUP_COLUMNS.map(([n], i) => (
              <Th key={n} scope="col" $align={i === 0 ? "center" : "left"} $last={n === "Selection"}>{n}</Th>
            ))}
          </tr>
        </thead>
        <tbody>
          <Tr $selected>
            <Td $h={44} $selected aria-label="Enabled"><Icon name="check" size={23} /></Td>
            {["-- All --", "00:00", "2025-07-27 00:00:00", "nfs-backups", "", "Fallback from storage config", "101,102"].map((v, i) => (
              <Td key={i} $h={44} $selected>{v}</Td>
            ))}
          </Tr>
        </tbody>
      </Table>
    </Content>
  );
}

function ClusterLog() {
  const scroller = useRef(null);
  useLayoutEffect(() => {
    scroller.current.scrollTop = 11;
  }, []);
  return (
    <LogPanel>
      <Tabs role="tablist">
        <Tab type="button" role="tab" aria-selected="false">Tasks</Tab>
        <Tab type="button" role="tab" aria-selected="true" $active>Cluster log</Tab>
      </Tabs>
      <LogArea>
        <LogScroll ref={scroller}>
          <Table>
            <colgroup>{LOG_COLUMNS.map(([n, w]) => <Col key={n} $w={w} />)}</colgroup>
            <thead>
              <tr>{LOG_COLUMNS.map(([n]) => <Th key={n} scope="col" $sticky>{n}</Th>)}</tr>
            </thead>
            <tbody>
              {LOG.map(([time, pid, message, status], row) => {
                const selected = row === SELECTED_LOG;
                const blueLine = selected || row === SELECTED_LOG - 1;
                return (
                  <Tr key={time} $selected={selected} $alt={row % 2 === 1}>
                    {[time, "pve1", "pvedaemon", pid, "root@pam", "info"].map((v, i) => (
                      <Td key={i} $selected={blueLine}>{v}</Td>
                    ))}
                    <Td $selected={blueLine}>
                      {message}
                      {status && <Marked>{status}</Marked>}
                    </Td>
                  </Tr>
                );
              })}
            </tbody>
          </Table>
        </LogScroll>
        <ScrollRail aria-hidden="true">
          <RailCap />
          <Svg $w={16} $size={12} viewBox="0 0 16 12"><path d="M7 1q1-1.200 2 0l6.500 9q.8 2-1 2h-13q-1.800 0-1-2z" /></Svg>
          <RailThumb />
          <Spacer />
          <Svg $w={16} $size={12} viewBox="0 0 16 12"><path d="M7 11q1 1.200 2 0l6.500-9q.8-2-1-2h-13q-1.800 0-1 2z" /></Svg>
        </ScrollRail>
      </LogArea>
    </LogPanel>
  );
}

export default function App() {
  return (
    <>
      <GlobalStyle />
      <Page>
        <TopBar />
        <Workspace>
          <ResourceTree />
          <Center>
            <TitleBar>
              <Title>Datacenter</Title>
              <IconButton icon="question">Help</IconButton>
            </TitleBar>
            <Split>
              <ConfigNav />
              <BackupJobs />
            </Split>
          </Center>
        </Workspace>
        <Splitter>
          <SplitHandle>
            <Svg $w={16} $size={5} viewBox="0 0 16 5" color="#c4c4c4" aria-hidden="true"><path d="M0 0h16l-5 5H5z" /></Svg>
          </SplitHandle>
        </Splitter>
        <ClusterLog />
      </Page>
      <EdgeTab />
    </>
  );
}
